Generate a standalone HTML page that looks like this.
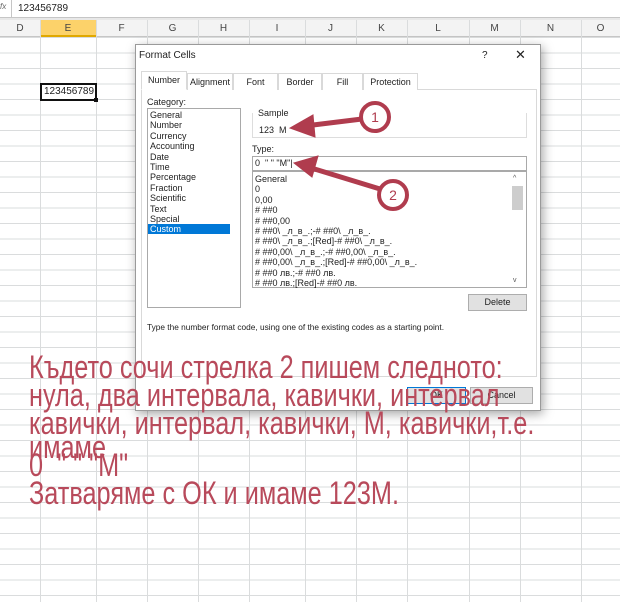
<!DOCTYPE html>
<html><head><meta charset="utf-8"><style>
*{margin:0;padding:0;box-sizing:border-box}
body{width:620px;height:602px;overflow:hidden;background:#fff;font-family:"Liberation Sans",sans-serif;position:relative;font-size:9px;color:#222}
.a{position:absolute}
.grid{position:absolute;left:0;top:37px;width:620px;height:565px;
background-image:linear-gradient(#dadcdd 1px,transparent 1px);background-size:100% 15.5px}
.vl{position:absolute;top:20px;width:1px;height:582px;background:#dadcdd}
.hd{position:absolute;top:20px;height:17px;background:#f3f3f3;border-bottom:1px solid #c6c6c6;text-align:center;line-height:17px;font-size:10px;color:#444}
.tab{position:absolute;top:73px;height:17px;border:1px solid #d9d9d9;border-bottom:none;background:#fff;text-align:center;line-height:16px;font-size:9px}
.box{position:absolute;border:1px solid #a9a9a9;background:#fff}
.btn{position:absolute;border:1px solid #adadad;background:#e1e1e1;text-align:center;font-size:9px;line-height:15px}
.rt{position:absolute;left:29px;color:#b84a5b;font-size:32px;white-space:nowrap;transform:scaleX(0.79);transform-origin:0 0;line-height:32px}
.li{line-height:10.4px;font-size:9px}
</style></head><body>
<div class="a" style="left:0;top:0;width:620px;height:18px;border-bottom:1px solid #c6c6c6;background:#fff"></div>
<div class="a" style="left:0;top:0;width:12px;height:18px;border-right:1px solid #c6c6c6;font-size:8px;color:#666;line-height:14px;font-style:italic">fx</div>
<div class="a" style="left:18px;top:3px;font-size:10px">123456789</div>
<div class="a" style="left:0;top:18px;width:620px;height:2px;background:#e8e8e8"></div>
<div class="grid"></div>
<div class="hd" style="left:0;width:620px"></div>
<div class="hd" style="left:40px;width:56px;background:#fcd26a;border-bottom:2px solid #e0a800">E</div>
<div class="hd" style="left:0;width:40px">D</div>
<div class="hd" style="left:96px;width:51px">F</div>
<div class="hd" style="left:147px;width:51px">G</div>
<div class="hd" style="left:198px;width:51px">H</div>
<div class="hd" style="left:249px;width:56px">I</div>
<div class="hd" style="left:305px;width:51px">J</div>
<div class="hd" style="left:356px;width:51px">K</div>
<div class="hd" style="left:407px;width:62px">L</div>
<div class="hd" style="left:469px;width:51px">M</div>
<div class="hd" style="left:520px;width:61px">N</div>
<div class="hd" style="left:581px;width:39px">O</div>
<div class="vl" style="left:40px"></div><div class="vl" style="left:96px"></div><div class="vl" style="left:147px"></div><div class="vl" style="left:198px"></div><div class="vl" style="left:249px"></div><div class="vl" style="left:305px"></div><div class="vl" style="left:356px"></div><div class="vl" style="left:407px"></div><div class="vl" style="left:469px"></div><div class="vl" style="left:520px"></div><div class="vl" style="left:581px"></div>
<div class="a" style="left:40px;top:83px;width:57px;height:18px;border:2px solid #111;background:#fff;font-size:10px;line-height:14px;padding-left:2px">123456789</div>
<div class="a" style="left:94px;top:98px;width:4px;height:4px;background:#111"></div>

<div class="a" style="left:135px;top:44px;width:406px;height:367px;background:#fff;border:1px solid #9a9a9a;box-shadow:2px 3px 10px rgba(0,0,0,.35)"></div>
<div class="a" style="left:139px;top:50px;font-size:10px">Format Cells</div>
<div class="a" style="left:482px;top:50px;font-size:10px">?</div>
<div class="a" style="left:515px;top:47px;font-size:13px">✕</div>
<div class="a" style="left:141px;top:89px;width:396px;height:288px;border:1px solid #d9d9d9;background:#fff"></div>
<div class="tab" style="left:141px;width:46px;top:71px;height:19px;border-bottom:1px solid #fff">Number</div>
<div class="tab" style="left:187px;width:46px">Alignment</div>
<div class="tab" style="left:233px;width:45px">Font</div>
<div class="tab" style="left:278px;width:44px">Border</div>
<div class="tab" style="left:322px;width:41px">Fill</div>
<div class="tab" style="left:363px;width:55px">Protection</div>
<div class="a" style="left:147px;top:97px;font-size:9px">Category:</div>
<div class="box" style="left:147px;top:108px;width:94px;height:200px"></div>
<div class="a li" style="left:150px;top:110px">General<br>Number<br>Currency<br>Accounting<br>Date<br>Time<br>Percentage<br>Fraction<br>Scientific<br>Text<br>Special</div>
<div class="a li" style="left:148px;top:224px;width:82px;background:#0078d7;color:#fff;padding-left:2px">Custom</div>
<div class="box" style="left:252px;top:113px;width:275px;height:25px;border-color:#ddd;border-top:none"></div>
<div class="a" style="left:256px;top:108px;font-size:9px;background:#fff;padding:0 2px">Sample</div>
<div class="a" style="left:259px;top:125px;font-size:9px">123 &nbsp;M</div>
<div class="a" style="left:252px;top:144px;font-size:9px">Type:</div>
<div class="box" style="left:252px;top:156px;width:275px;height:15px"></div>
<div class="a" style="left:255px;top:158px;font-size:9px">0 &nbsp;" " "M"|</div>
<div class="box" style="left:252px;top:171px;width:275px;height:117px"></div>
<div class="a" style="left:512px;top:186px;width:11px;height:24px;background:#cdcdcd"></div>
<div class="a" style="left:513px;top:175px;font-size:7px;color:#555">^</div>
<div class="a" style="left:513px;top:277px;font-size:7px;color:#555">v</div>
<div class="a li" style="left:255px;top:174px">General<br>0<br>0,00<br># ##0<br># ##0,00<br># ##0\ _л_в_.;-# ##0\ _л_в_.<br># ##0\ _л_в_.;[Red]-# ##0\ _л_в_.<br># ##0,00\ _л_в_.;-# ##0,00\ _л_в_.<br># ##0,00\ _л_в_.;[Red]-# ##0,00\ _л_в_.<br># ##0 лв.;-# ##0 лв.<br># ##0 лв.;[Red]-# ##0 лв.</div>
<div class="btn" style="left:468px;top:294px;width:59px;height:17px">Delete</div>
<div class="a" style="left:147px;top:322px;font-size:8.3px">Type the number format code, using one of the existing codes as a starting point.</div>
<div class="btn" style="left:407px;top:387px;width:59px;height:17px;border:1px solid #0078d7">OK</div>
<div class="btn" style="left:470px;top:387px;width:63px;height:17px">Cancel</div>

<svg class="a" style="left:0;top:0" width="620" height="602">
<g stroke="#b03c4e" fill="#b03c4e">
<line x1="362" y1="119" x2="305" y2="126" stroke-width="5"/>
<polygon points="290,128 313,115 315,137" stroke-width="1"/>
<circle cx="375" cy="117" r="14" fill="#fff" stroke-width="4"/>
<line x1="380" y1="189" x2="308" y2="167" stroke-width="5"/>
<polygon points="294,163 318,156 312,177" stroke-width="1"/>
<circle cx="393" cy="195" r="14" fill="#fff" stroke-width="4"/>
</g>
<text x="375" y="122" font-size="14" fill="#b03c4e" text-anchor="middle" font-family="Liberation Sans">1</text>
<text x="393" y="200" font-size="14" fill="#b03c4e" text-anchor="middle" font-family="Liberation Sans">2</text>
</svg>

<div class="rt" style="top:351px">Където сочи стрелка 2 пишем следното:</div>
<div class="rt" style="top:379px">нула, два интервала, кавички, интервал</div>
<div class="rt" style="top:407px">кавички, интервал, кавички, М, кавички,т.е.</div>
<div class="rt" style="top:431px">имаме</div>
<div class="rt" style="top:449px">0 &nbsp;" " "М"</div>
<div class="rt" style="top:477px">Затваряме с ОК и имаме 123М.</div>
</body></html>
